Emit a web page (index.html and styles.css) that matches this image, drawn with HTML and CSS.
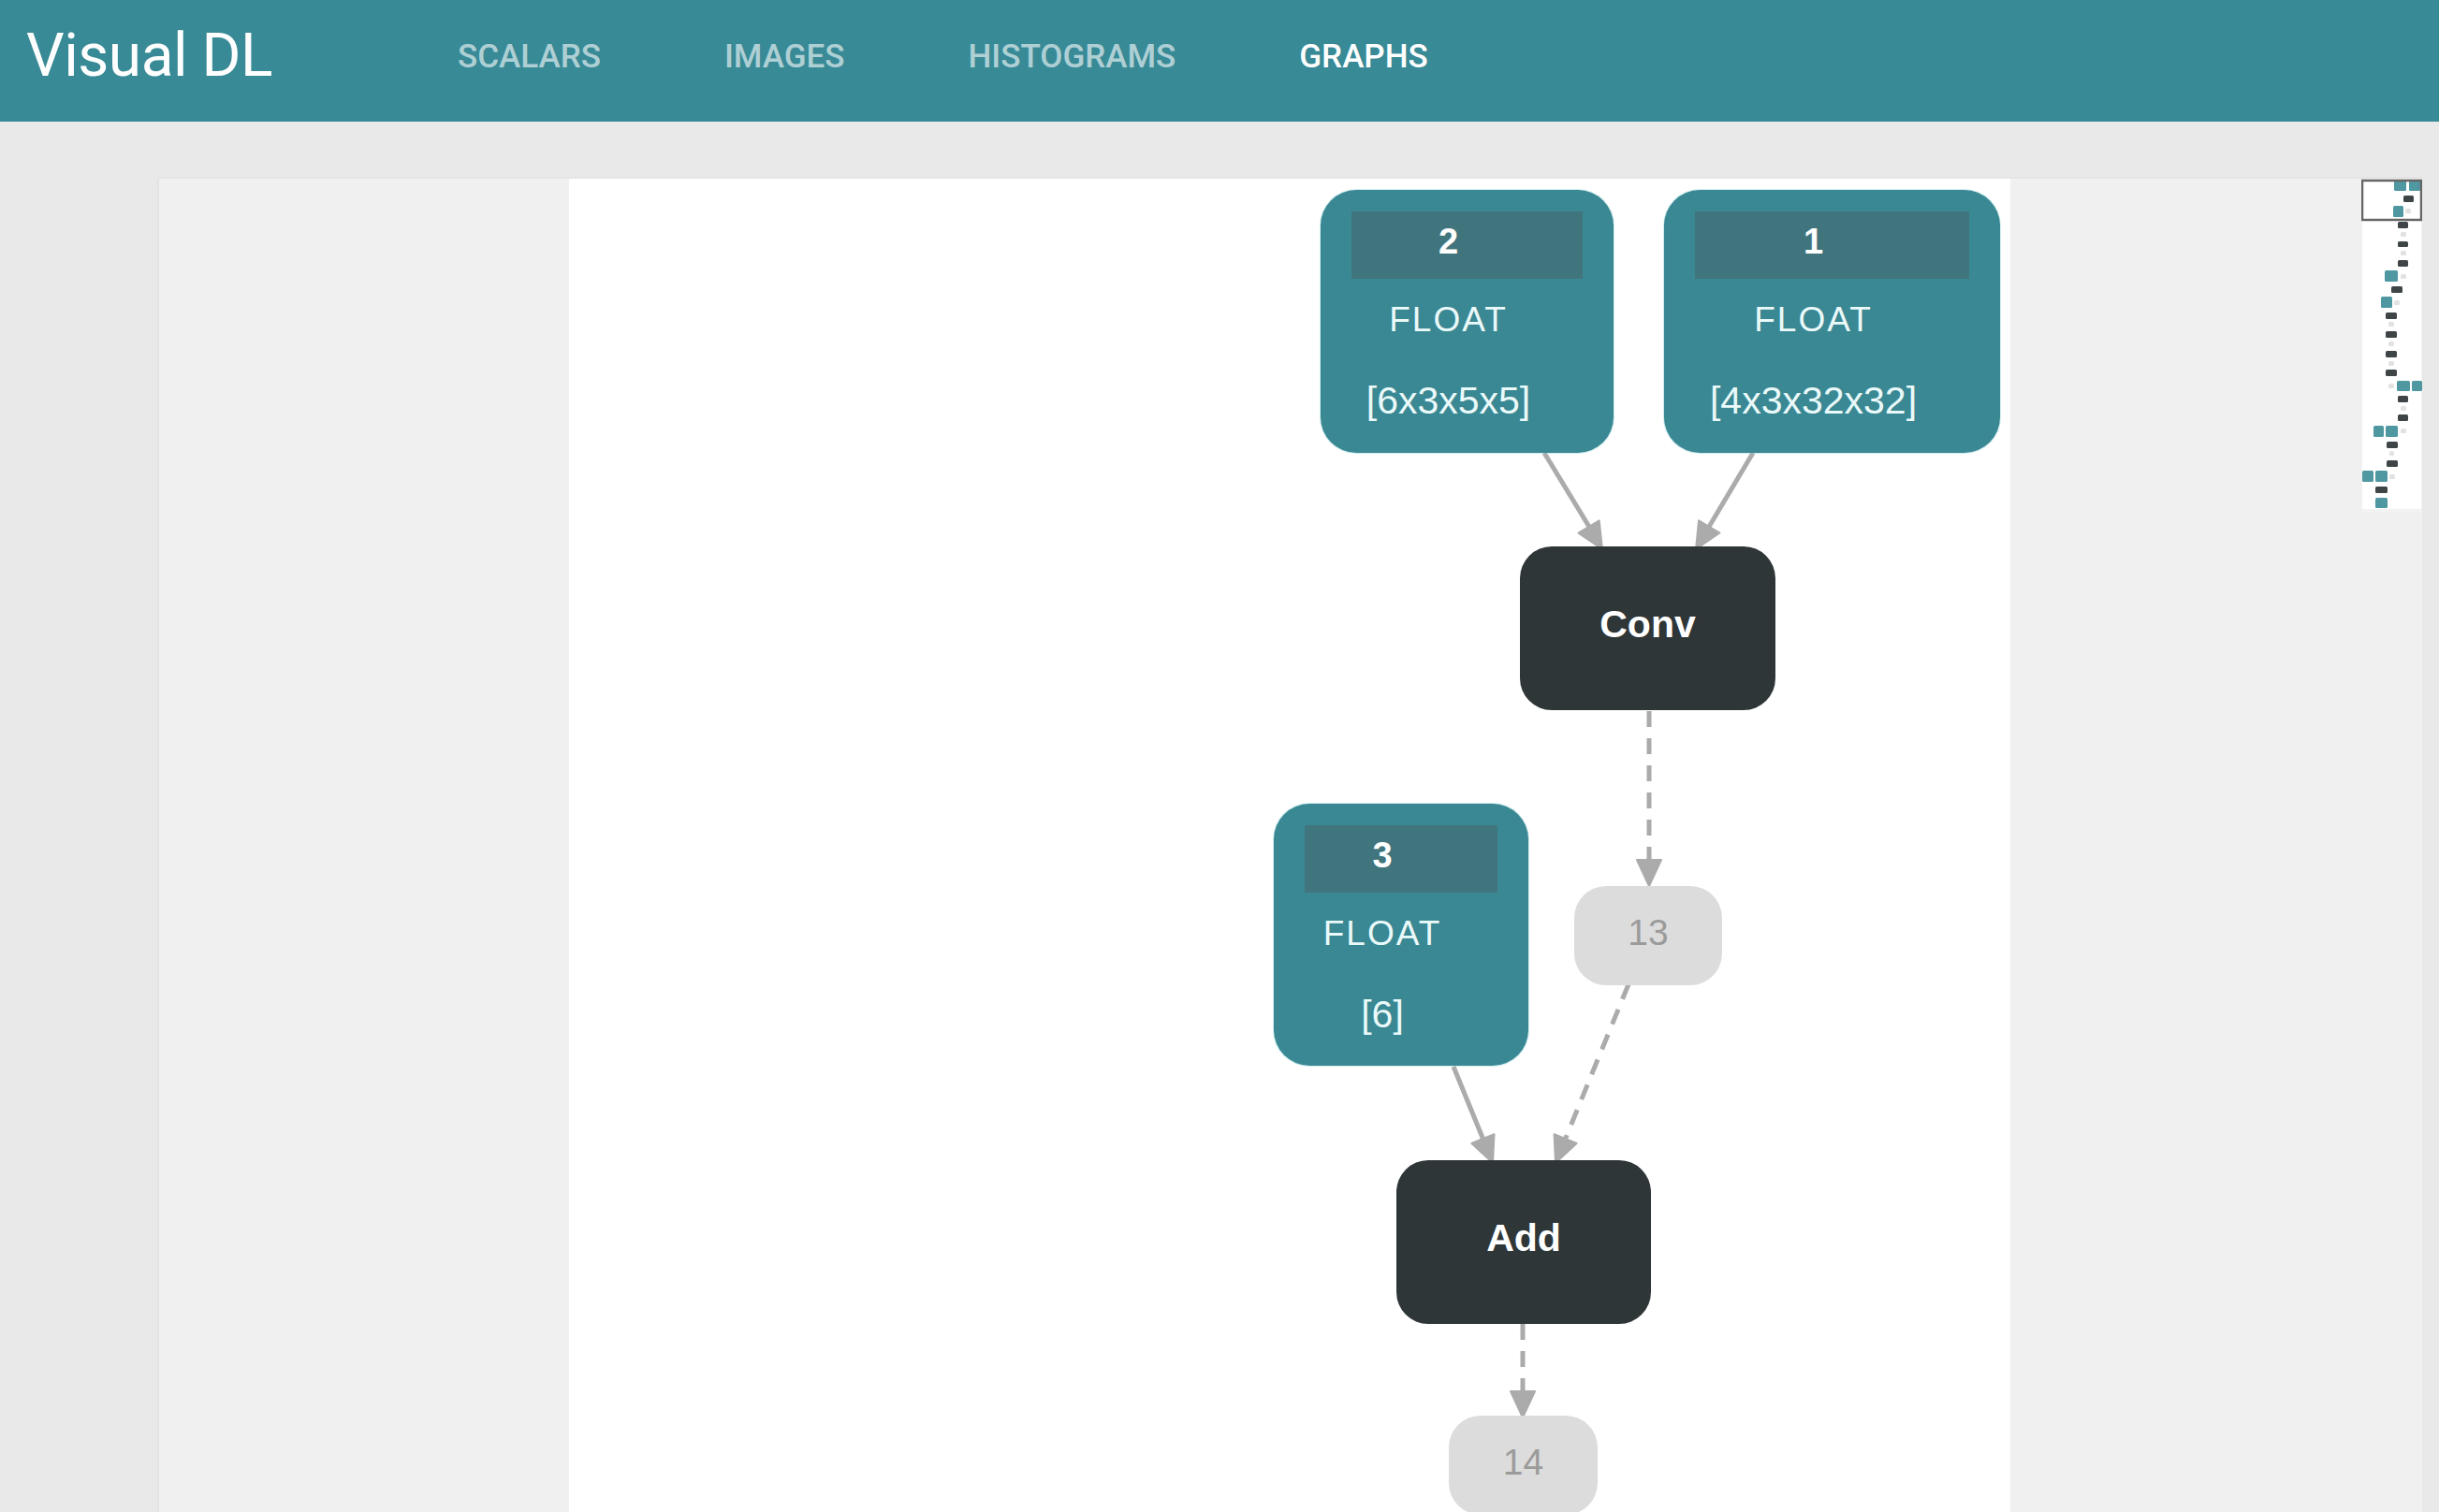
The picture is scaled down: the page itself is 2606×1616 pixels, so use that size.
FILE: index.html
```html
<!DOCTYPE html>
<html lang="en">
<head>
<meta charset="utf-8">
<title>Visual DL - Graphs</title>
<link rel="stylesheet" href="styles.css">
</head>
<body>
<header class="topbar">
  <div class="logo">Visual DL</div>
  <nav class="nav">
    <a class="nav-item">SCALARS</a>
    <a class="nav-item">IMAGES</a>
    <a class="nav-item">HISTOGRAMS</a>
    <a class="nav-item active">GRAPHS</a>
  </nav>
</header>
<main class="main">
  <section class="panel">
    <div class="panel-spacer"></div>
    <div class="canvas">
      <svg class="edges" width="1540" height="1425" viewBox="0 0 1540 1425">
        <g class="edge-solid">
          <line x1="1042" y1="293" x2="1090" y2="372"/>
          <line x1="1265" y1="293" x2="1218" y2="372"/>
          <line x1="945" y1="949" x2="976.5" y2="1026"/>
        </g>
        <g class="edge-dashed">
          <line x1="1154" y1="569" x2="1154" y2="729"/>
          <line x1="1132" y1="861" x2="1064.6" y2="1026"/>
          <line x1="1019" y1="1224" x2="1019" y2="1297"/>
        </g>
        <g class="arrow">
          <polygon points="1104,396 1078.5,378.7 1100.7,365.3"/>
          <polygon points="1204,396 1207.1,365.3 1229.5,378.5"/>
          <polygon points="1154,756 1141,728 1167,728"/>
          <polygon points="987,1052 964.4,1031 988.5,1021.2"/>
          <polygon points="1054,1052 1052.6,1021.2 1076.6,1031"/>
          <polygon points="1019,1324 1006,1296 1032,1296"/>
        </g>
      </svg>

      <div class="node var n2">
        <div class="band">2</div>
        <div class="dtype">FLOAT</div>
        <div class="shape">[6x3x5x5]</div>
      </div>
      <div class="node var n1">
        <div class="band">1</div>
        <div class="dtype">FLOAT</div>
        <div class="shape">[4x3x32x32]</div>
      </div>
      <div class="node op n-conv">Conv</div>
      <div class="node var n3">
        <div class="band">3</div>
        <div class="dtype">FLOAT</div>
        <div class="shape">[6]</div>
      </div>
      <div class="node tensor n13">13</div>
      <div class="node op n-add">Add</div>
      <div class="node tensor n14">14</div>
    </div>
    <div class="panel-fill"></div>
    <aside class="minimap">
      <svg width="65" height="354" viewBox="0 0 65 354">
        <rect class="mm-bg" x="0" y="0" width="65" height="354"/>
        <g class="mm-t">
          <rect x="35" y="2" width="13" height="11"/>
          <rect x="51" y="2" width="12" height="11"/>
          <rect x="34" y="29" width="11" height="12"/>
          <rect x="25" y="98" width="14" height="12"/>
          <rect x="21" y="126" width="12" height="12"/>
          <rect x="38" y="216" width="14" height="11"/>
          <rect x="54" y="216" width="11" height="11"/>
          <rect x="13" y="264" width="11" height="12"/>
          <rect x="26" y="264" width="13" height="12"/>
          <rect x="1" y="312" width="12" height="12"/>
          <rect x="15" y="312" width="13" height="12"/>
          <rect x="15" y="341" width="13" height="11"/>
        </g>
        <g class="mm-d">
          <rect x="45" y="18" width="11" height="7"/>
          <rect x="39" y="46" width="11" height="7"/>
          <rect x="39" y="67" width="11" height="6"/>
          <rect x="39" y="87" width="11" height="7"/>
          <rect x="32" y="115" width="12" height="7"/>
          <rect x="26" y="143" width="12" height="7"/>
          <rect x="26" y="163" width="12" height="7"/>
          <rect x="26" y="184" width="12" height="7"/>
          <rect x="26" y="204" width="12" height="7"/>
          <rect x="39" y="232" width="11" height="7"/>
          <rect x="39" y="252" width="11" height="7"/>
          <rect x="27" y="281" width="12" height="7"/>
          <rect x="27" y="301" width="12" height="7"/>
          <rect x="15" y="329" width="13" height="7"/>
        </g>
        <g class="mm-l">
          <rect x="47" y="32" width="6" height="5"/>
          <rect x="42" y="57" width="6" height="5"/>
          <rect x="42" y="77" width="6" height="5"/>
          <rect x="42" y="102" width="6" height="5"/>
          <rect x="35" y="130" width="6" height="5"/>
          <rect x="29" y="153" width="6" height="5"/>
          <rect x="29" y="174" width="6" height="5"/>
          <rect x="29" y="195" width="6" height="5"/>
          <rect x="29" y="219" width="6" height="5"/>
          <rect x="42" y="243" width="6" height="5"/>
          <rect x="42" y="267" width="6" height="5"/>
          <rect x="30" y="291" width="5" height="5"/>
          <rect x="30" y="316" width="6" height="5"/>
        </g>
        <rect class="mm-view" x="1" y="2" width="63" height="42"/>
      </svg>
    </aside>
  </section>
</main>
</body>
</html>
```

FILE: styles.css
```css
* {
  box-sizing: border-box;
}

html, body {
  margin: 0;
  padding: 0;
  height: 100%;
  overflow: hidden;
}

body {
  background: #e9e9e9;
  font-family: "Liberation Sans", Arial, sans-serif;
}

.topbar {
  height: 130px;
  background: #388a96;
  display: flex;
  align-items: center;
  padding: 0 0 10px 28px;
}

.logo {
  width: 461px;
  font-family: Roboto, "Liberation Sans", sans-serif;
  font-weight: 400;
  font-size: 64px;
  line-height: 1;
  color: #ffffff;
  letter-spacing: -0.5px;
}

.nav {
  display: flex;
  gap: 132px;
}

.nav-item {
  font-family: Roboto, "Liberation Sans", sans-serif;
  font-weight: 500;
  font-size: 35px;
  line-height: 1;
  color: rgba(255, 255, 255, 0.62);
  text-decoration: none;
}

.nav-item.active {
  color: #ffffff;
}

.main {
  padding: 59px 18px 0 168px;
}

.panel {
  display: flex;
  height: 1427px;
  background: #f0f0f0;
  border-left: 2px solid #e3e3e3;
  border-top: 2px solid #e5e5e5;
}

.panel-spacer {
  width: 438px;
  flex: none;
}

.canvas {
  position: relative;
  width: 1540px;
  flex: none;
  background: #ffffff;
  overflow: hidden;
}

.panel-fill {
  flex: 1;
}

.edges {
  position: absolute;
  left: 0;
  top: 0;
}

.edge-solid line,
.edge-dashed line {
  stroke: #ababab;
  stroke-width: 5;
}

.edge-dashed line {
  stroke-dasharray: 17 12;
}

.arrow polygon {
  fill: #ababab;
  stroke: #ababab;
  stroke-width: 2;
  stroke-linejoin: round;
}

.node {
  position: absolute;
}

.var {
  background: #3a8893;
  border-radius: 38px;
  padding: 23px 33px 0;
  color: #eaf9f9;
  display: flex;
  flex-direction: column;
  box-shadow: 0 0 0 1px rgba(120, 200, 205, 0.35);
}

.band {
  height: 72px;
  background: #41757d;
  line-height: 64px;
  text-align: center;
  padding-right: 40px;
  font-weight: bold;
  font-size: 38px;
  color: #ffffff;
}

.dtype {
  line-height: 88px;
  font-size: 37px;
  letter-spacing: 2px;
  text-align: center;
  padding-right: 40px;
}

.shape {
  line-height: 84px;
  font-size: 41px;
  text-align: center;
  padding-right: 40px;
}

.op {
  background: #2f3638;
  border-radius: 34px;
  color: #ffffff;
  font-weight: bold;
  font-size: 41px;
  display: flex;
  align-items: center;
  justify-content: center;
  padding-bottom: 8px;
}

.tensor {
  background: #dcdcdc;
  border-radius: 34px;
  color: #9b9b9b;
  font-size: 39px;
  display: flex;
  align-items: center;
  justify-content: center;
  padding-bottom: 6px;
}

.n2 { left: 803px; top: 12px; width: 313px; height: 281px; }
.n1 { left: 1170px; top: 12px; width: 359px; height: 281px; }
.n-conv { left: 1016px; top: 393px; width: 273px; height: 175px; }
.n3 { left: 753px; top: 668px; width: 272px; height: 280px; }
.n13 { left: 1074px; top: 756px; width: 158px; height: 106px; }
.n-add { left: 884px; top: 1049px; width: 272px; height: 175px; }
.n14 { left: 940px; top: 1322px; width: 159px; height: 106px; }

.minimap {
  width: 65px;
  flex: none;
  align-self: flex-start;
  height: 356px;
  background: #f3f3f3;
}

.minimap svg {
  display: block;
}

.mm-bg {
  fill: #ffffff;
  stroke: #e4e4e4;
  stroke-width: 1;
}

.mm-t rect {
  fill: #4f98a2;
  rx: 1.5px;
}

.mm-d rect {
  fill: #3f4547;
  rx: 1.5px;
}

.mm-l rect {
  fill: #e2e2e2;
  rx: 1.5px;
}

.mm-view {
  fill: none;
  stroke: #666666;
  stroke-width: 2.5;
}
```
